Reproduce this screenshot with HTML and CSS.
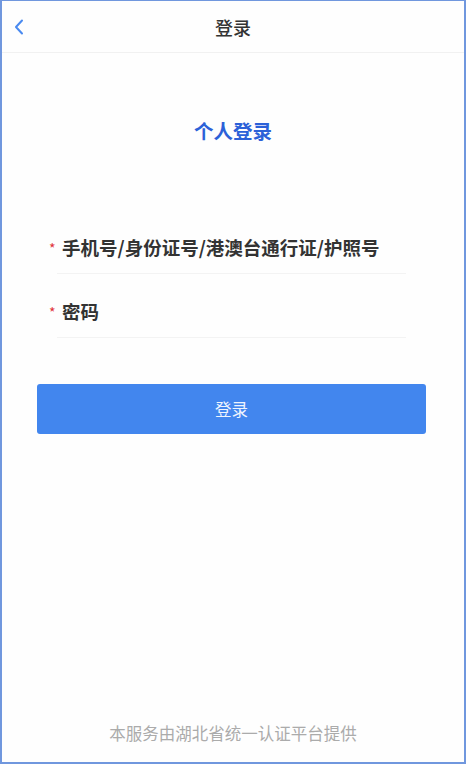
FILE: index.html
```html
<!doctype html>
<html lang="zh-CN">
<head>
    <meta charset="UTF-8">
    <meta name="viewport" content="width=device-width, initial-scale=1.0">
    <title>登录</title>
    <link rel="stylesheet" href="styles.css">
</head>
<body>
<div class="page">
    <div class="nav">
        <div class="nav_back">
            <svg width="12" height="16" viewBox="0 0 12 16">
                <path d="M9,1.5L3,8l6,6.5"/>
            </svg>
        </div>
        <div class="nav_title">登录</div>
    </div>
    <div class="main">
        <div class="main_title">个人登录</div>
        <div class="form">
            <div class="field">
                <span class="field_star">*</span>
                <span class="field_label">手机号/身份证号/港澳台通行证/护照号</span>
            </div>
            <div class="field">
                <span class="field_star">*</span>
                <span class="field_label">密码</span>
            </div>
        </div>
        <div class="submit">登录</div>
    </div>
    <div class="footer">本服务由湖北省统一认证平台提供</div>
</div>
</body>
</html>
```

FILE: styles.css
```css
* {
    padding: 0;
    margin: 0;
    box-sizing: border-box;
}

body {
    background-color: #ffffff;
    font-family: "Noto Sans CJK SC", "Noto Sans", sans-serif;
}

.page {
    display: flex;
    flex-direction: column;
    width: 466px;
    height: 764px;
    border: #7097de 2px solid;
    border-top-width: 1px;
    background-color: #fefefe;
}

.nav {
    position: relative;
    display: flex;
    justify-content: center;
    align-items: center;
    height: 52px;
    border-bottom: #f1f1f1 1px solid;
}

.nav_back {
    position: absolute;
    left: 11px;
    top: 18px;
    display: flex;
}

.nav_back path {
    fill: none;
    stroke: #4a8af0;
    stroke-width: 2;
    stroke-linecap: round;
    stroke-linejoin: round;
}

.nav_title {
    font-size: 18px;
    color: #333333;
    font-weight: 500;
}

.main {
    flex: 1;
    display: flex;
    flex-direction: column;
}

.main_title {
    margin-top: 64px;
    text-align: center;
    font-size: 19.5px;
    font-weight: 700;
    color: #2c61d8;
    line-height: 28px;
}

.form {
    margin: 65px 58px 0 55px;
}

.field {
    display: flex;
    align-items: flex-start;
    height: 64px;
    padding-top: 24px;
    border-bottom: #f3f3f3 1px solid;
}

.field_star {
    margin-left: -8px;
    margin-top: 7px;
    width: 13px;
    color: #e0333a;
    font-size: 14px;
    line-height: 14px;
}

.field_label {
    font-size: 18.5px;
    font-weight: 700;
    color: #333333;
    line-height: 26px;
}

.submit {
    display: flex;
    justify-content: center;
    align-items: center;
    margin: 46px 38px 0 35px;
    height: 50px;
    border-radius: 3px;
    background-color: #4286ee;
    color: #eef4fe;
    font-size: 16.5px;
}

.footer {
    padding-bottom: 17px;
    text-align: center;
    font-size: 16.5px;
    color: #ababab;
    line-height: 24px;
}
```
